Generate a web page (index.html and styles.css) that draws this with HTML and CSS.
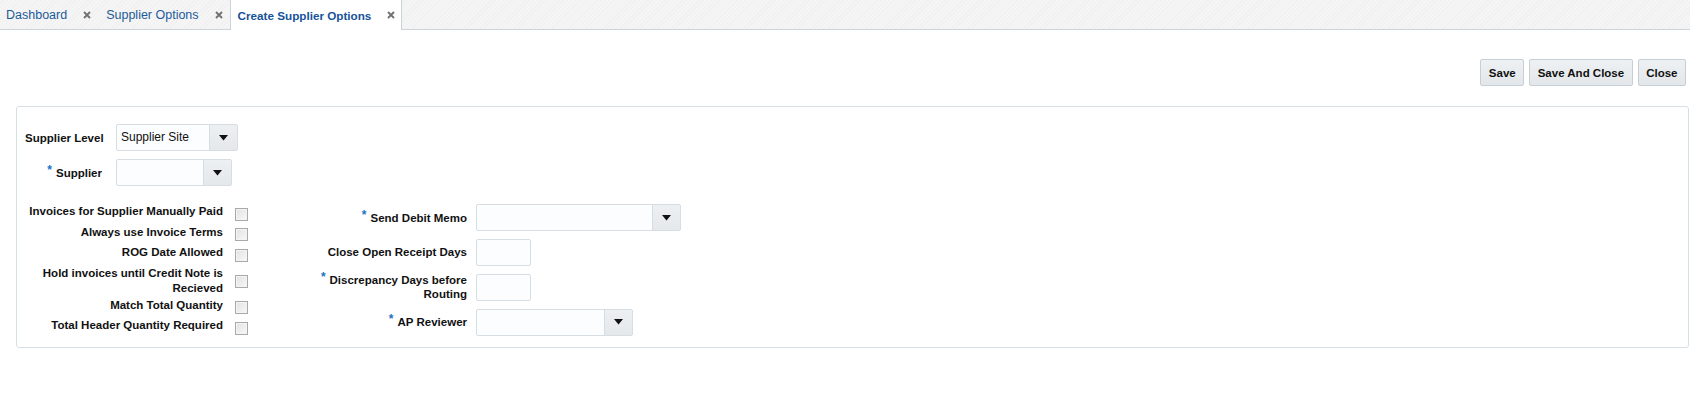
FILE: index.html
```html
<!DOCTYPE html>
<html>
<head>
<meta charset="utf-8">
<link rel="stylesheet" href="styles.css">
</head>
<body>
<div class="tabbar">
  <div class="tab tab-first"><span class="tab-label">Dashboard</span><svg class="tab-close" width="8" height="8" viewBox="0 0 8 8"><path d="M1 1L7 7M7 1L1 7" stroke="#6f6f6f" stroke-width="1.8"/></svg></div>
  <div class="tab"><span class="tab-label">Supplier Options</span><svg class="tab-close" width="8" height="8" viewBox="0 0 8 8"><path d="M1 1L7 7M7 1L1 7" stroke="#6f6f6f" stroke-width="1.8"/></svg></div>
  <div class="tab tab-active"><span class="tab-label">Create Supplier Options</span><svg class="tab-close" width="8" height="8" viewBox="0 0 8 8"><path d="M1 1L7 7M7 1L1 7" stroke="#6f6f6f" stroke-width="1.8"/></svg></div>
</div>

<div class="toolbar">
  <button class="btn">Save</button>
  <button class="btn">Save And Close</button>
  <button class="btn">Close</button>
</div>

<div class="panel">
  <div class="form-top">
    <div class="lbl">Supplier Level</div>
    <div class="select w121"><span class="select-text">Supplier Site</span><span class="select-btn"><svg width="9" height="6" viewBox="0 0 9 6"><polygon points="0,0 9,0 4.5,5.5" fill="#111"/></svg></span></div>
    <div class="lbl"><span class="req">*</span>Supplier</div>
    <div class="select w116"><span class="select-text"></span><span class="select-btn"><svg width="9" height="6" viewBox="0 0 9 6"><polygon points="0,0 9,0 4.5,5.5" fill="#111"/></svg></span></div>
  </div>

  <div class="form-cols">
    <div class="col1">
      <div class="clbl">Invoices for Supplier Manually Paid</div><div class="cbcell"><span class="cb"></span></div>
      <div class="clbl">Always use Invoice Terms</div><div class="cbcell"><span class="cb"></span></div>
      <div class="clbl">ROG Date Allowed</div><div class="cbcell"><span class="cb"></span></div>
      <div class="clbl">Hold invoices until Credit Note is Recieved</div><div class="cbcell"><span class="cb"></span></div>
      <div class="clbl">Match Total Quantity</div><div class="cbcell"><span class="cb"></span></div>
      <div class="clbl">Total Header Quantity Required</div><div class="cbcell"><span class="cb"></span></div>
    </div>
    <div class="col2">
      <div class="lbl2"><span class="req">*</span>Send Debit Memo</div>
      <div class="select w204"><span class="select-text"></span><span class="select-btn"><svg width="9" height="6" viewBox="0 0 9 6"><polygon points="0,0 9,0 4.5,5.5" fill="#111"/></svg></span></div>
      <div class="lbl2">Close Open Receipt Days</div>
      <div class="input"></div>
      <div class="lbl2"><span class="req">*</span>Discrepancy Days before Routing</div>
      <div class="input"></div>
      <div class="lbl2"><span class="req">*</span>AP Reviewer</div>
      <div class="select w156"><span class="select-text"></span><span class="select-btn"><svg width="9" height="6" viewBox="0 0 9 6"><polygon points="0,0 9,0 4.5,5.5" fill="#111"/></svg></span></div>
    </div>
  </div>
</div>
</body>
</html>
```

FILE: styles.css
```css
html, body {
  margin: 0;
  padding: 0;
  background: #fff;
  font-family: "Liberation Sans", Arial, sans-serif;
  color: #111;
}

.tabbar {
  display: flex;
  align-items: stretch;
  height: 29px;
  border-bottom: 1px solid #cdd5dc;
  background: repeating-linear-gradient(135deg, #f5f5f5 0px, #f5f5f5 2px, #f0f0f0 2px, #f0f0f0 3px);
}

.tab {
  display: flex;
  align-items: center;
  gap: 16px;
  padding: 1px 7px 0 8px;
  font-size: 12.5px;
  color: #1d5b98;
}

.tab-first {
  padding-left: 6px;
}

.tab-active {
  background: #fff;
  border-left: 1px solid #cdd5dc;
  border-right: 1px solid #cdd5dc;
  margin-bottom: -1px;
  padding: 0 6px 0 7px;
  font-weight: bold;
  font-size: 11.7px;
  color: #17539a;
}

.tab-close {
  display: block;
}

.toolbar {
  display: flex;
  justify-content: flex-end;
  gap: 5px;
  padding: 29px 4px 0 0;
}

.btn {
  height: 27px;
  padding: 0 7.5px;
  font-family: "Liberation Sans", Arial, sans-serif;
  font-size: 11.5px;
  font-weight: bold;
  color: #111;
  background: linear-gradient(#eef1f3, #e3e7ea);
  border: 1px solid #c6ced6;
  border-radius: 2px;
}

.panel {
  margin: 20px 1px 0 16px;
  border: 1px solid #d6dfe6;
  border-radius: 3px;
  padding: 17px 0 8px 0;
}

.form-top {
  display: grid;
  grid-template-columns: 77px auto;
  column-gap: 14px;
  row-gap: 8px;
  align-items: center;
  justify-content: start;
  padding-left: 8px;
}

.lbl, .clbl, .lbl2 {
  font-size: 11.5px;
  font-weight: bold;
  text-align: right;
  color: #111;
}

.lbl {
  white-space: nowrap;
}

.req {
  color: #1c72c4;
  font-weight: bold;
  font-size: 12px;
  margin-right: 4px;
  position: relative;
  top: -3px;
}

.select {
  display: flex;
  height: 27px;
  box-sizing: border-box;
  border: 1px solid #d6dde3;
  border-radius: 2px;
  background: #fcfdfe;
}

.select-text {
  flex: 1;
  font-size: 12px;
  line-height: 25px;
  padding-left: 4px;
  color: #111;
}

.select-btn {
  width: 27px;
  border-left: 1px solid #d6dde3;
  background: linear-gradient(#edf0f2, #e4e8eb);
  display: flex;
  align-items: center;
  justify-content: center;
}

.select-btn svg {
  display: block;
}

.w121 { width: 122px; }
.w116 { width: 116px; }
.w204 { width: 205px; }
.w156 { width: 157px; }

.input {
  width: 55px;
  height: 27px;
  box-sizing: border-box;
  border: 1px solid #d6dde3;
  border-radius: 2px;
  background: #fcfdfe;
}

.form-cols {
  display: flex;
  align-items: flex-start;
  margin-top: 18px;
  padding-left: 12px;
}

.col1 {
  display: grid;
  grid-template-columns: 194px 13px;
  column-gap: 12px;
  align-items: center;
}

.clbl {
  line-height: 15px;
  padding: 0 0 2px 0;
  align-self: start;
}

.cbcell {
  height: 20.5px;
  display: flex;
  align-items: center;
}

.cb {
  display: block;
  width: 13px;
  height: 13px;
  box-sizing: border-box;
  border: 1px solid #a9a9a9;
  background: linear-gradient(135deg, #e2e2e2, #f8f8f8);
  box-shadow: inset 0 0 0 1px #f4f4f4;
}

.col2 {
  display: grid;
  grid-template-columns: 151px auto;
  column-gap: 9px;
  row-gap: 7.5px;
  align-items: center;
  margin-left: 68px;
}

.lbl2 {
  line-height: 14px;
}
```
